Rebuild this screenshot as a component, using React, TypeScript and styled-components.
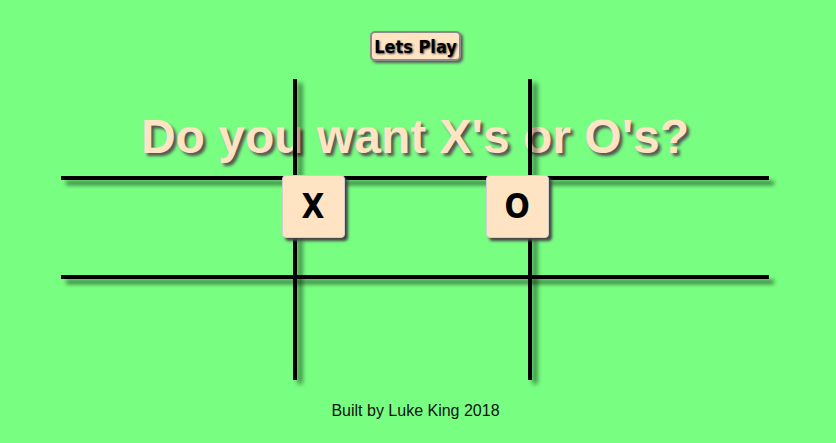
import React from "react";
import styled, { createGlobalStyle } from "styled-components";

const GlobalStyle = createGlobalStyle`
  html, body {
    margin: 0;
    padding: 0;
    background: #78ff82;
  }
  body {
    font-family: "Liberation Sans", Arial, sans-serif;
  }
`;

const Page = styled.div`
  width: 831px;
  height: 443px;
  box-sizing: border-box;
  padding-top: 31px;
  display: flex;
  flex-direction: column;
  align-items: center;
`;

const PlayButton = styled.button`
  width: 91px;
  height: 30px;
  padding: 0;
  box-sizing: border-box;
  background: #ffe4c4;
  border: 2px solid #8a8a8a;
  border-radius: 5px;
  box-shadow: 2px 2px 3px #555;
  font-family: "DejaVu Sans Condensed", "DejaVu Sans", sans-serif;
  font-weight: bold;
  font-size: 18px;
  color: #000;
  text-shadow: 1px 1px 2px #444;
  cursor: pointer;
`;

const Board = styled.div`
  position: relative;
  align-self: flex-start;
  margin-left: 61px;
  margin-top: 18px;
  display: grid;
  grid-template-columns: 232px 4px 231px 4px 237px;
  grid-template-rows: 97px 4px 95px 4px 101px;
`;

const VLine = styled.div<{ $col: number }>`
  grid-column: ${(p) => p.$col};
  grid-row: 1 / -1;
  background: #000;
  position: relative;
  z-index: 2;
  box-shadow: 5px 4px 5px rgba(0, 0, 0, 0.6);
`;

const HLine = styled.div<{ $row: number }>`
  grid-row: ${(p) => p.$row};
  grid-column: 1 / -1;
  background: #000;
  position: relative;
  z-index: 2;
  box-shadow: 5px 5px 4px rgba(0, 0, 0, 0.55);
`;

const Overlay = styled.div`
  position: absolute;
  top: 31px;
  left: 0;
  right: 0;
  display: flex;
  flex-direction: column;
  align-items: center;
`;

const Heading = styled.h1`
  margin: 0;
  position: relative;
  z-index: 1;
  font-family: "Liberation Sans", Arial, sans-serif;
  font-weight: bold;
  font-size: 48px;
  line-height: 54px;
  color: #ffe4c4;
  text-shadow: 3px 3px 3px #555;
  white-space: nowrap;
`;

const ChoiceRow = styled.div`
  margin-top: 11px;
  display: flex;
  gap: 141px;
  position: relative;
  z-index: 3;
`;

const ChoiceButton = styled.button`
  width: 63px;
  height: 63px;
  padding: 0;
  box-sizing: border-box;
  background: #ffe4c4;
  border: 1px solid #cfcfcf;
  border-radius: 4px;
  box-shadow: 3px 3px 3px #444;
  font-family: "DejaVu Sans Condensed", "DejaVu Sans", sans-serif;
  font-weight: bold;
  font-size: 33px;
  color: #000;
  cursor: pointer;
`;

const Footer = styled.p`
  margin: 22px 0 0;
  font-family: "Liberation Sans", Arial, sans-serif;
  font-size: 16px;
  color: #111;
`;

export default function App() {
  return (
    <>
      <GlobalStyle />
      <Page>
        <PlayButton>Lets Play</PlayButton>
        <Board>
          <VLine $col={2} />
          <VLine $col={4} />
          <HLine $row={2} />
          <HLine $row={4} />
          <Overlay>
            <Heading>Do you want X's or O's?</Heading>
            <ChoiceRow>
              <ChoiceButton>X</ChoiceButton>
              <ChoiceButton>O</ChoiceButton>
            </ChoiceRow>
          </Overlay>
        </Board>
        <Footer>Built by Luke King 2018</Footer>
      </Page>
    </>
  );
}
